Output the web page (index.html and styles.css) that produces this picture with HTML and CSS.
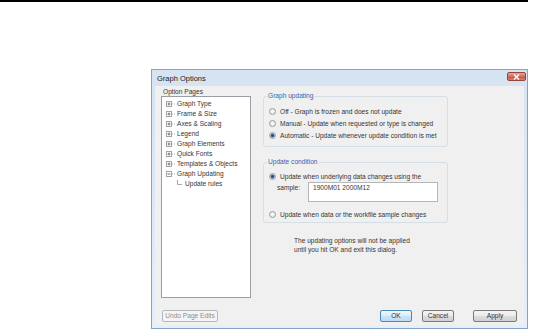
FILE: index.html
```html
<!DOCTYPE html>
<html lang="en">
<head>
<meta charset="utf-8">
<title>Graph Options</title>
<link rel="stylesheet" href="styles.css">
</head>
<body>
<div class="rule"></div>

<div class="dialog">
  <div class="titlebar">
    <span class="title">Graph Options</span>
    <span class="close">
      <svg width="7" height="6" viewBox="0 0 7 6"><path d="M1 0.5 L6 5.5 M6 0.5 L1 5.5" stroke="#fff" stroke-width="1.4"/></svg>
    </span>
  </div>

  <div class="client">
    <div class="main">
      <div class="pages">
        <div class="pages-label">Option Pages</div>
        <ul class="tree">
          <li><svg class="exp" width="11" height="10"><rect x="0.5" y="2.5" width="5" height="5" fill="#fff" stroke="#a3a3a3"/><path d="M1.5 5 H4.5 M3 3.5 V6.5" stroke="#555" stroke-width="0.8"/><path d="M6 5 H10" stroke="#b0b0b0" stroke-dasharray="1 1"/></svg>Graph Type</li>
          <li><svg class="exp" width="11" height="10"><rect x="0.5" y="2.5" width="5" height="5" fill="#fff" stroke="#a3a3a3"/><path d="M1.5 5 H4.5 M3 3.5 V6.5" stroke="#555" stroke-width="0.8"/><path d="M6 5 H10" stroke="#b0b0b0" stroke-dasharray="1 1"/></svg>Frame &amp; Size</li>
          <li><svg class="exp" width="11" height="10"><rect x="0.5" y="2.5" width="5" height="5" fill="#fff" stroke="#a3a3a3"/><path d="M1.5 5 H4.5 M3 3.5 V6.5" stroke="#555" stroke-width="0.8"/><path d="M6 5 H10" stroke="#b0b0b0" stroke-dasharray="1 1"/></svg>Axes &amp; Scaling</li>
          <li><svg class="exp" width="11" height="10"><rect x="0.5" y="2.5" width="5" height="5" fill="#fff" stroke="#a3a3a3"/><path d="M1.5 5 H4.5 M3 3.5 V6.5" stroke="#555" stroke-width="0.8"/><path d="M6 5 H10" stroke="#b0b0b0" stroke-dasharray="1 1"/></svg>Legend</li>
          <li><svg class="exp" width="11" height="10"><rect x="0.5" y="2.5" width="5" height="5" fill="#fff" stroke="#a3a3a3"/><path d="M1.5 5 H4.5 M3 3.5 V6.5" stroke="#555" stroke-width="0.8"/><path d="M6 5 H10" stroke="#b0b0b0" stroke-dasharray="1 1"/></svg>Graph Elements</li>
          <li><svg class="exp" width="11" height="10"><rect x="0.5" y="2.5" width="5" height="5" fill="#fff" stroke="#a3a3a3"/><path d="M1.5 5 H4.5 M3 3.5 V6.5" stroke="#555" stroke-width="0.8"/><path d="M6 5 H10" stroke="#b0b0b0" stroke-dasharray="1 1"/></svg>Quick Fonts</li>
          <li><svg class="exp" width="11" height="10"><rect x="0.5" y="2.5" width="5" height="5" fill="#fff" stroke="#a3a3a3"/><path d="M1.5 5 H4.5 M3 3.5 V6.5" stroke="#555" stroke-width="0.8"/><path d="M6 5 H10" stroke="#b0b0b0" stroke-dasharray="1 1"/></svg>Templates &amp; Objects</li>
          <li><svg class="exp" width="11" height="10"><rect x="0.5" y="2.5" width="5" height="5" fill="#fff" stroke="#a3a3a3"/><path d="M1.5 5 H4.5" stroke="#555" stroke-width="0.8"/><path d="M6 5 H10" stroke="#b0b0b0" stroke-dasharray="1 1"/></svg>Graph Updating</li>
          <li class="child"><svg class="exp" width="19" height="10"><path d="M11.5 1 V5.5 H16" fill="none" stroke="#a8a8a8"/></svg>Update rules</li>
        </ul>
      </div>

      <div class="settings">
        <fieldset class="group first">
          <legend>Graph updating</legend>
          <div class="radio"><i class="dot"></i>Off - Graph is frozen and does not update</div>
          <div class="radio"><i class="dot"></i>Manual - Update when requested or type is changed</div>
          <div class="radio"><i class="dot on"></i>Automatic - Update whenever update condition is met</div>
        </fieldset>

        <fieldset class="group second">
          <legend>Update condition</legend>
          <div class="radio"><i class="dot on"></i>Update when underlying data changes using the</div>
          <div class="sample">
            <span class="sample-label">sample:</span>
            <div class="textbox">1900M01 2000M12</div>
          </div>
          <div class="radio lower"><i class="dot"></i>Update when data or the workfile sample changes</div>
        </fieldset>

        <p class="note">The updating options will not be applied<br>until you hit OK and exit this dialog.</p>
      </div>
    </div>

    <div class="buttons">
      <span class="btn undo">Undo Page Edits</span>
      <span class="btn ok">OK</span>
      <span class="btn cancel">Cancel</span>
      <span class="btn apply">Apply</span>
    </div>
  </div>
</div>
</body>
</html>
```

FILE: styles.css
```css
body {
	margin: 0;
	background: #ffffff;
	font-family: "Liberation Sans", Arial, sans-serif;
	font-size: 6.6px;
	color: #353535;
}
.rule {
	width: 528px;
	height: 2px;
	background: #000000;
}
.dialog {
	margin: 67px 0 0 151px;
	width: 377px;
	height: 260px;
	box-sizing: border-box;
	border: 1px solid #86a4ca;
	background: linear-gradient(#d6e3f2, #e6eef8);
	padding: 0 3px 3px;
	display: flex;
	flex-direction: column;
}
.titlebar {
	height: 16px;
	display: flex;
	justify-content: space-between;
	align-items: center;
}
.title {
	padding-left: 2px;
	font-size: 7.5px;
	color: #1a1a1a;
}
.close {
	align-self: flex-start;
	margin: 2px -2px 0 0;
	width: 19px;
	height: 9px;
	box-sizing: border-box;
	border: 1px solid #94463a;
	border-radius: 2px;
	background: linear-gradient(#e8a597, #d56d5e 50%, #c85440 55%, #d8806a);
	display: flex;
	justify-content: center;
	align-items: center;
}
.client {
	flex: 1;
	background: #f0f0f0;
	padding: 2px 7px 3px 6px;
	display: flex;
	flex-direction: column;
}
.main {
	display: grid;
	grid-template-columns: 90px 185px;
	column-gap: 12px;
}
.pages-label {
	height: 8px;
	line-height: 8px;
	padding-left: 2px;
}
.tree {
	margin: 0;
	list-style: none;
	height: 202px;
	box-sizing: border-box;
	border: 1px solid #9a9ea4;
	background: #ffffff;
	padding: 2px 0 0 4px;
}
.tree li {
	height: 10px;
	line-height: 10px;
	display: flex;
	align-items: center;
	white-space: nowrap;
}
.exp {
	flex: none;
}
.settings {
	padding-top: 4px;
}
.group {
	margin: 0;
	border: 1px solid #d5dfe5;
	border-radius: 3px;
	padding: 5px 6px 5px 5px;
}
.group legend {
	margin-left: -2px;
	padding: 0 1px;
	line-height: 8px;
	color: #3564b4;
}
.group.second {
	margin-top: 11px;
	padding-top: 4px;
	padding-bottom: 2px;
}
.radio {
	height: 12px;
	display: flex;
	align-items: center;
	white-space: nowrap;
}
.radio.lower {
	margin-top: 6px;
}
.dot {
	flex: none;
	width: 7px;
	height: 7px;
	box-sizing: border-box;
	border: 1px solid #9a9c9e;
	border-radius: 50%;
	background: radial-gradient(circle, #ffffff, #dadde0);
	margin-right: 4px;
}
.dot.on {
	background: radial-gradient(circle, #23487f 0, #2f5f9c 1.6px, #dfe6ee 2.3px);
}
.sample {
	display: flex;
	align-items: flex-start;
	padding-left: 8px;
}
.sample-label {
	width: 31px;
	line-height: 8px;
	padding-top: 2px;
}
.textbox {
	width: 130px;
	height: 20px;
	box-sizing: border-box;
	border: 1px solid #b5b7bc;
	background: #ffffff;
	padding: 1px 4px;
	line-height: 8px;
}
.note {
	margin: 13px 0 0;
	padding-left: 31px;
	line-height: 9px;
}
.buttons {
	margin-top: 12px;
	display: flex;
}
.btn {
	height: 12px;
	box-sizing: border-box;
	border: 1px solid #7a7a7a;
	border-radius: 2px;
	background: linear-gradient(#f3f3f3, #ebebeb 50%, #dddddd 50%, #d0d0d0);
	line-height: 10px;
	text-align: center;
}
.undo {
	margin-left: 1px;
	width: 56px;
	border-color: #b3b7ba;
	background: #f4f4f4;
	color: #8f8f8f;
}
.ok {
	margin-left: auto;
	width: 32px;
	border-color: #4a88b8;
	background: linear-gradient(#eef6fc, #dcecf8 50%, #c9e3f6 50%, #bfdcf1);
}
.cancel {
	margin-left: 10px;
	width: 32px;
}
.apply {
	margin-left: 19px;
	width: 44px;
}
```
